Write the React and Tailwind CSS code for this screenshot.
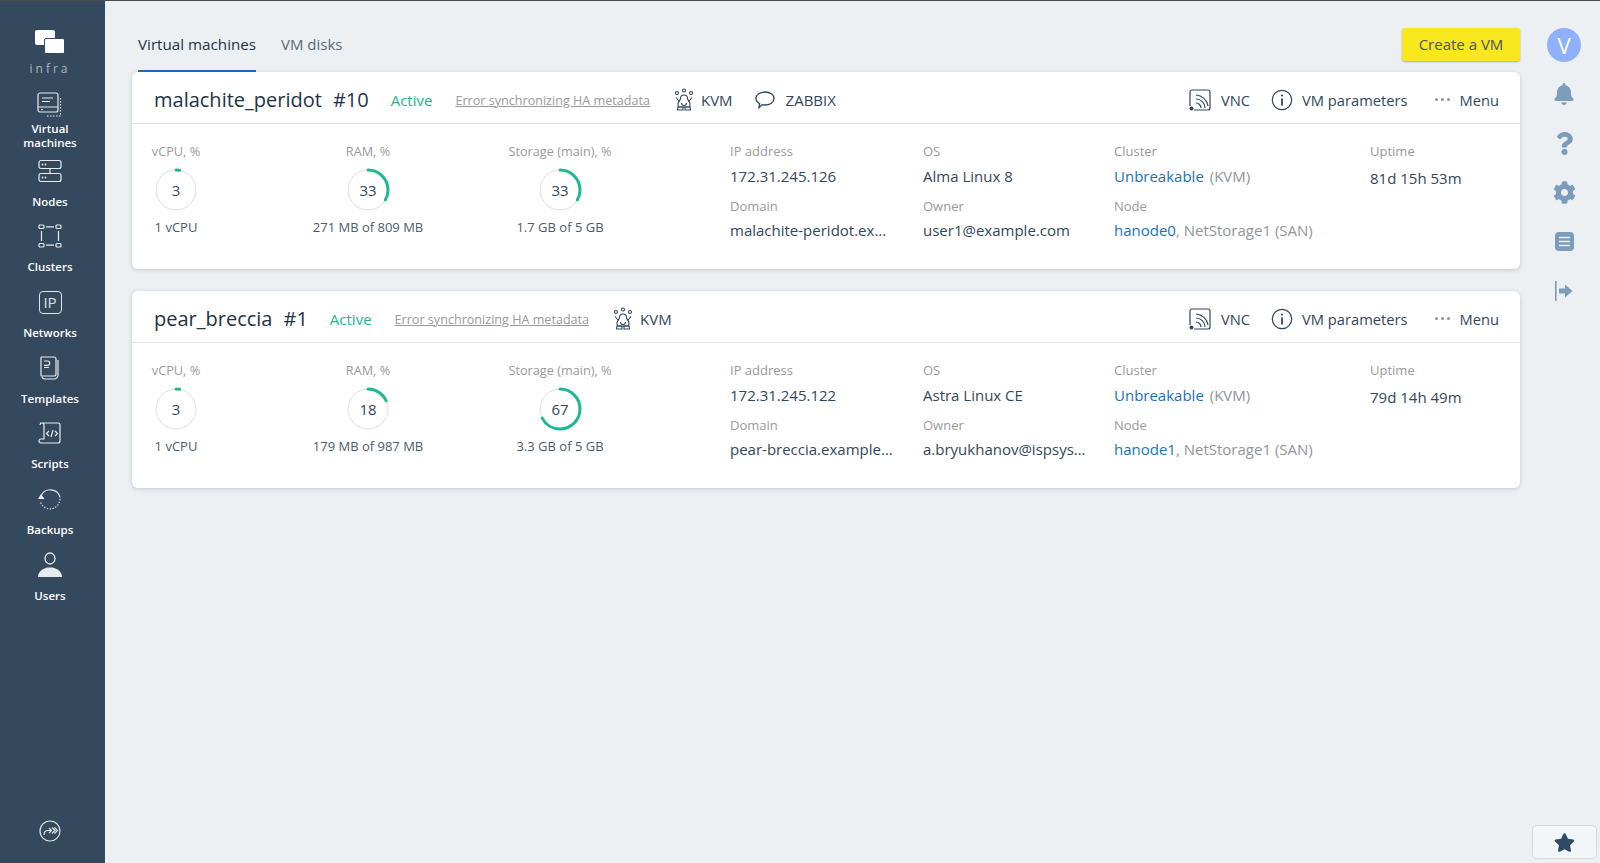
import { FaBell, FaCog, FaQuestion, FaStar } from "react-icons/fa";

const font = { fontFamily: '"Open Sans", "Noto Sans", sans-serif' };

function VmIcon() {
  return (
    <svg width="26" height="26" viewBox="0 0 26 26" fill="none" stroke="currentColor" strokeWidth="1.2">
      <rect x="1" y="1" width="20" height="19" rx="2" />
      <path d="M5 6h11M5 9.500h8M1 15h20" />
      <circle cx="5" cy="17.500" r=".8" fill="currentColor" stroke="none" />
      <path d="M23.500 6v18h-15" strokeDasharray="1.600 1.400" />
    </svg>
  );
}

function NodesIcon() {
  return (
    <svg width="24" height="24" viewBox="0 0 24 24" fill="none" stroke="currentColor" strokeWidth="1.2">
      <rect x="1" y="1.500" width="22" height="8" rx="2" />
      <rect x="1" y="14.500" width="22" height="8" rx="2" />
      <path d="M12 9.500v5" />
      <circle cx="4.500" cy="5.500" r=".9" fill="currentColor" stroke="none" />
      <circle cx="7.500" cy="5.500" r=".9" fill="currentColor" stroke="none" />
      <circle cx="4.500" cy="18.500" r=".9" fill="currentColor" stroke="none" />
      <circle cx="7.500" cy="18.500" r=".9" fill="currentColor" stroke="none" />
    </svg>
  );
}

function ClustersIcon() {
  return (
    <svg width="24" height="24" viewBox="0 0 24 24" fill="none" stroke="currentColor" strokeWidth="1.2">
      <rect x="1" y="1" width="5" height="3.500" rx="1" />
      <rect x="18" y="1" width="5" height="3.500" rx="1" />
      <rect x="1" y="19.500" width="5" height="3.500" rx="1" />
      <rect x="18" y="19.500" width="5" height="3.500" rx="1" />
      <path d="M8 2.800h8M8 21.200h8M3.500 7v10M20.500 7v10" />
    </svg>
  );
}

function IpIcon() {
  return (
    <div className="flex h-[23px] w-[23px] items-center justify-center rounded-[4px] border border-[#dfe5ea] text-[15px] leading-none text-[#dfe5ea]">
      IP
    </div>
  );
}

function TemplatesIcon() {
  return (
    <svg width="22" height="24" viewBox="0 0 22 24" fill="none" stroke="currentColor" strokeWidth="1.2">
      <path d="M3 1h12a2 2 0 0 1 2 2v15a2 2 0 0 1-2 2H3a2 2 0 0 1-1-.3V1.300A2 2 0 0 1 3 1z" />
      <path d="M19 4v15a4 4 0 0 1-4 4H6a3 3 0 0 1-3-2" />
      <path d="M5 5h3.500a2.200 2.200 0 0 1 0 4.400H5M5 11.500h5" />
    </svg>
  );
}

function ScriptsIcon() {
  return (
    <svg width="24" height="24" viewBox="0 0 24 24" fill="none" stroke="currentColor" strokeWidth="1.2">
      <path d="M2 2h18a2 2 0 0 1 2 2v16a2 2 0 0 1-2 2H3a2 2 0 0 1 0-4h3V4a2 2 0 0 0-2-2 2 2 0 0 0-2 2" />
      <path d="M11 10l-2.500 2.500L11 15M17 10l2.500 2.500L17 15M15 9l-2 7" />
    </svg>
  );
}

function BackupsIcon() {
  return (
    <svg width="24" height="24" viewBox="0 0 24 24" fill="none" stroke="currentColor" strokeWidth="1.2">
      <path d="M3 9A10 10 0 0 1 22 10.500" />
      <path d="M22 12a10 10 0 0 1-19.500 3" strokeDasharray="1.300 1.600" />
      <path d="M0 12l3-5 3.500 5z" fill="currentColor" stroke="none" />
    </svg>
  );
}

function UsersIcon() {
  return (
    <svg width="26" height="26" viewBox="0 0 26 26" fill="none" stroke="currentColor" strokeWidth="1.3">
      <ellipse cx="13" cy="6.500" rx="5" ry="5.500" />
      <path d="M1 25c0-5 4-8 9-9.500h6c5 1.500 9 4.500 9 9.500z" fill="currentColor" stroke="none" />
    </svg>
  );
}

function KvmIcon() {
  return (
    <svg width="20" height="24" viewBox="0 0 20 24" fill="none" stroke="#33475b" strokeWidth="1.1">
      <circle cx="3" cy="5" r="1.500" />
      <circle cx="10" cy="2.500" r="1.500" />
      <circle cx="17" cy="5" r="1.500" />
      <path d="M6.500 10.500a3.500 3.500 0 0 1 7 0c0 1.500 2 3 2.500 5 .3 2-1 3.500-1 3.500H5s-1.300-1.500-1-3.500c.5-2 2.500-3.500 2.500-5z" />
      <path d="M2 9.500l3.500 4M18 9.500l-3.500 4M7.500 15a2.500 2.500 0 0 0 5 0" />
      <path d="M4 19h5v3H3.500zM11 19h5l.5 3H11z" />
    </svg>
  );
}

function ChatIcon() {
  return (
    <svg width="22" height="20" viewBox="0 0 22 20" fill="none" stroke="#33475b" strokeWidth="1.3">
      <path d="M11 2c5 0 9 2.700 9 6.500S16 15 11 15c-1 0-2-.1-2.800-.3L5 17.500l.6-4C3.300 12.300 2 10.500 2 8.500 2 4.700 6 2 11 2z" />
    </svg>
  );
}

function VncIcon() {
  return (
    <svg width="24" height="24" viewBox="0 0 24 24" fill="none" stroke="#33475b" strokeWidth="1.200">
      <path d="M2 18V4a2 2 0 0 1 2-2h16a2 2 0 0 1 2 2v16a2 2 0 0 1-2 2H6" />
      <circle cx="3.500" cy="20.500" r="2" fill="#33475b" stroke="none" />
      <path d="M8 15a5 5 0 0 1 5 5M8 11a9 9 0 0 1 9 9M8 7a13 13 0 0 1 12 11" />
    </svg>
  );
}

function InfoIcon() {
  return (
    <svg width="22" height="22" viewBox="0 0 22 22" fill="none" stroke="#33475b" strokeWidth="1.2">
      <circle cx="11" cy="11" r="9.700" />
      <path d="M11 9.500V16.500" strokeWidth="1.800" />
      <circle cx="11" cy="6.500" r="1.100" fill="#33475b" stroke="none" />
    </svg>
  );
}

function LogIcon() {
  return (
    <svg width="19" height="19" viewBox="0 0 19 19" fill="#7c9cbb">
      <rect width="19" height="19" rx="4" />
      <path d="M4 5.500h11M4 9.500h11M4 13.500h11" stroke="#eceff3" strokeWidth="1.400" />
    </svg>
  );
}

function LogoutIcon() {
  return (
    <svg width="20" height="20" viewBox="0 0 20 20" fill="#7c9cbb">
      <rect x="1" y="0" width="1.600" height="20" />
      <path d="M5 7.500h6V3.500l7.500 6.500-7.500 6.500v-4H5z" />
    </svg>
  );
}

function ExpandIcon() {
  return (
    <svg width="22" height="22" viewBox="0 0 22 22" fill="none" stroke="#dfe5ea" strokeWidth="1.200">
      <circle cx="11" cy="11" r="10" />
      <path d="M5 15c0-3 1.500-4.500 4-4.500h3M10 8l2.500 2.500L10 13M13 7.500l3 3-3 3M15.500 7.500l3 3-3 3" />
    </svg>
  );
}

const navItems = [
  { icon: <VmIcon />, label: "Virtual machines", labelClass: "mt-[4px]" },
  { icon: <NodesIcon />, label: "Nodes", labelClass: "mt-[11px]" },
  { icon: <ClustersIcon />, label: "Clusters", labelClass: "mt-[11px]" },
  { icon: <IpIcon />, label: "Networks", labelClass: "mt-[11px]" },
  { icon: <TemplatesIcon />, label: "Templates", labelClass: "mt-[11px]" },
  { icon: <ScriptsIcon />, label: "Scripts", labelClass: "mt-[11px]" },
  { icon: <BackupsIcon />, label: "Backups", labelClass: "mt-[11px]" },
  { icon: <UsersIcon />, label: "Users", labelClass: "mt-[11px]" },
];

function Gauge({ value }) {
  const c = 2 * Math.PI * 20;
  return (
    <div className="relative mt-[8px] mb-[4px] flex h-[44px] w-[44px] items-center justify-center text-[15px] text-[#33475b]">
      <svg width="44" height="44" viewBox="0 0 44 44" fill="none" className="absolute inset-0 -rotate-90">
        <circle cx="22" cy="22" r="20" stroke="#dcdfe2" strokeWidth="1" />
        <circle
          cx="22"
          cy="22"
          r="20"
          stroke="#1fb894"
          strokeWidth="3"
          strokeLinecap="round"
          strokeDasharray={`${(value / 100) * c} ${c}`}
        />
      </svg>
      {value}
    </div>
  );
}

function Metric({ title, value, caption }) {
  return (
    <div className="flex w-[88px] flex-col items-center whitespace-nowrap">
      <div className="text-[12.700px] leading-[18px] text-[#9a9a9a]">{title}</div>
      <Gauge value={value} />
      <div className="mt-[2px] text-[13px] leading-[18px] text-[#4b5c6d]">{caption}</div>
    </div>
  );
}

function Info({ label, children, valueClass = "mt-[4px]" }) {
  return (
    <div>
      <div className="text-[13px] leading-[18px] text-[#9a9a9a]">{label}</div>
      <div className={`truncate text-[15px] leading-[22px] text-[#33475b] ${valueClass}`}>{children}</div>
    </div>
  );
}

function VmCard({ vm }) {
  return (
    <div className="h-[197px] rounded-[6px] bg-white shadow-[0_1px_4px_rgba(40,60,80,0.22)]">
      <div className="flex h-[52px] items-center border-b border-[#e3e6e9] pl-[22px] pr-[21px] pt-[5px]">
        <div className="text-[20px] font-medium text-[#1f3347]">{vm.name}</div>
        <div className="ml-[11px] text-[20px] font-medium text-[#1f3347]">#{vm.id}</div>
        <div className="ml-[22px] text-[15px] text-[#26b38f]">Active</div>
        <div className="ml-[23px] mt-[2px] text-[12.600px] text-[#9a9a9a] underline">Error synchronizing HA metadata</div>
        <div className="ml-[24px] flex items-center gap-[7px] text-[15px] text-[#33475b]">
          <KvmIcon />
          KVM
        </div>
        {vm.zabbix && (
          <div className="ml-[21px] flex items-center gap-[10px] text-[15px] text-[#33475b]">
            <ChatIcon />
            ZABBIX
          </div>
        )}
        <div className="ml-auto flex items-center text-[14.700px] text-[#33475b]">
          <div className="flex items-center gap-[9px]">
            <VncIcon />
            VNC
          </div>
          <div className="ml-[21px] flex items-center gap-[9px]">
            <InfoIcon />
            VM parameters
          </div>
          <div className="ml-[27px] flex items-center gap-[10px]">
            <span className="flex gap-[3px]">
              <i className="h-[3px] w-[3px] rounded-full bg-[#8a95a1]" />
              <i className="h-[3px] w-[3px] rounded-full bg-[#8a95a1]" />
              <i className="h-[3px] w-[3px] rounded-full bg-[#8a95a1]" />
            </span>
            Menu
          </div>
        </div>
      </div>
      <div className="flex pt-[18px]">
        <div className="flex gap-[104px]">
          {vm.metrics.map((m) => (
            <Metric key={m.title} {...m} />
          ))}
        </div>
        <div className="ml-[126px] flex w-[163px] flex-col gap-[10px]">
          <Info label="IP address" valueClass="mt-[5px]">
            {vm.ip}
          </Info>
          <Info label="Domain">{vm.domain}</Info>
        </div>
        <div className="ml-[30px] flex w-[165px] flex-col gap-[10px]">
          <Info label="OS" valueClass="mt-[5px]">
            {vm.os}
          </Info>
          <Info label="Owner">{vm.owner}</Info>
        </div>
        <div className="ml-[26px] flex w-[256px] flex-col gap-[10px]">
          <Info label="Cluster" valueClass="mt-[5px]">
            <span className="text-[#1a73ba]">Unbreakable</span>{" "}
            <span className="ml-[2px] text-[#8f959b]">(KVM)</span>
          </Info>
          <Info label="Node">
            <span className="text-[#1a73ba]">{vm.node}</span>
            <span className="text-[#8f959b]">, NetStorage1 (SAN)</span>
          </Info>
        </div>
        <div>
          <Info label="Uptime" valueClass="mt-[7px]">
            {vm.uptime}
          </Info>
        </div>
      </div>
    </div>
  );
}

const vms = [
  {
    name: "malachite_peridot",
    id: 10,
    zabbix: true,
    ip: "172.31.245.126",
    domain: "malachite-peridot.example.com",
    os: "Alma Linux 8",
    owner: "user1@example.com",
    node: "hanode0",
    uptime: "81d 15h 53m",
    metrics: [
      { title: "vCPU, %", value: 3, caption: "1 vCPU" },
      { title: "RAM, %", value: 33, caption: "271 MB of 809 MB" },
      { title: "Storage (main), %", value: 33, caption: "1.7 GB of 5 GB" },
    ],
  },
  {
    name: "pear_breccia",
    id: 1,
    zabbix: false,
    ip: "172.31.245.122",
    domain: "pear-breccia.example.com",
    os: "Astra Linux CE",
    owner: "a.bryukhanov@ispsystem.com",
    node: "hanode1",
    uptime: "79d 14h 49m",
    metrics: [
      { title: "vCPU, %", value: 3, caption: "1 vCPU" },
      { title: "RAM, %", value: 18, caption: "179 MB of 987 MB" },
      { title: "Storage (main), %", value: 67, caption: "3.3 GB of 5 GB" },
    ],
  },
];

export default function App() {
  return (
    <div className="flex h-[863px] overflow-hidden border-t border-[#4a4a4a] bg-[#ecf0f3]" style={font}>
      {/* Left sidebar */}
      <aside className="flex w-[105px] shrink-0 flex-col items-center bg-[#34495e] pr-[5px] text-[#e6ebef]">
        <div className="mt-[29px] flex flex-col items-center">
          <div className="relative h-[24px] w-[30px]">
            <div className="absolute left-0 top-0 h-[15px] w-[20px] rounded-[2px] bg-white" />
            <div className="absolute bottom-0 right-0 h-[16px] w-[21px] rounded-[2px] border border-[#34495e] bg-white" />
          </div>
          <div className="mt-[8px] text-[12px] leading-[14px] tracking-[3px] text-[#aab6c1]">infra</div>
        </div>
        <nav className="mt-[16px] flex flex-col items-center">
          {navItems.map((item) => (
            <div key={item.label} className="flex h-[65.700px] w-[100px] flex-col items-center">
              <div className="flex h-[26px] items-center justify-center">{item.icon}</div>
              <div className={`w-[90px] text-center text-[11.500px] font-semibold leading-[14px] text-white ${item.labelClass}`}>
                {item.label}
              </div>
            </div>
          ))}
        </nav>
        <div className="mt-auto mb-[21px]">
          <ExpandIcon />
        </div>
      </aside>

      {/* Main column */}
      <main className="w-[1415px] shrink-0 pl-[27px]">
        <div className="flex h-[71px] items-start">
          <div className="ml-[6px] flex h-[71px] w-[118px] items-start whitespace-nowrap border-b-2 border-[#1a6fb5] pt-[32px] text-[15.200px] leading-[22px] font-medium text-[#1f3347]">
            Virtual machines
          </div>
          <div className="ml-[25px] pt-[32px] text-[15px] leading-[22px] text-[#5b6b7a]">VM disks</div>
          <div className="ml-auto mt-[27px] flex h-[33px] w-[118px] items-center justify-center rounded-[3px] bg-[#f9e71e] text-[15px] text-[#4b5563] shadow-[0_1px_2px_rgba(0,0,0,0.3)]">
            Create a VM
          </div>
        </div>
        <div className="flex flex-col gap-[22px]">
          {vms.map((vm) => (
            <VmCard key={vm.id} vm={vm} />
          ))}
        </div>
      </main>

      {/* Right rail */}
      <aside className="relative flex flex-1 flex-col items-center pl-[8px] pt-[27px] text-[#7c9cbb]">
        <div className="flex h-[34px] w-[34px] items-center justify-center rounded-full bg-[#8fb0fb] text-[22px] font-medium text-white">
          V
        </div>
        <div className="mt-[19px] flex flex-col items-center gap-[23.300px]">
          <div className="flex h-[26px] items-center">
            <FaBell size={22} />
          </div>
          <div className="flex h-[26px] items-center">
            <FaQuestion size={23} />
          </div>
          <div className="flex h-[26px] items-center">
            <FaCog size={23} />
          </div>
          <div className="flex h-[26px] items-center">
            <LogIcon />
          </div>
          <div className="flex h-[26px] items-center">
            <LogoutIcon />
          </div>
        </div>
        <div className="absolute bottom-[4px] right-[3px] flex h-[34px] w-[65px] items-center justify-center rounded-[5px] border border-[#d5d9dc] bg-[#f3f6f8]">
          <FaStar size={21} className="text-[#2f4a66]" />
        </div>
      </aside>
    </div>
  );
}
